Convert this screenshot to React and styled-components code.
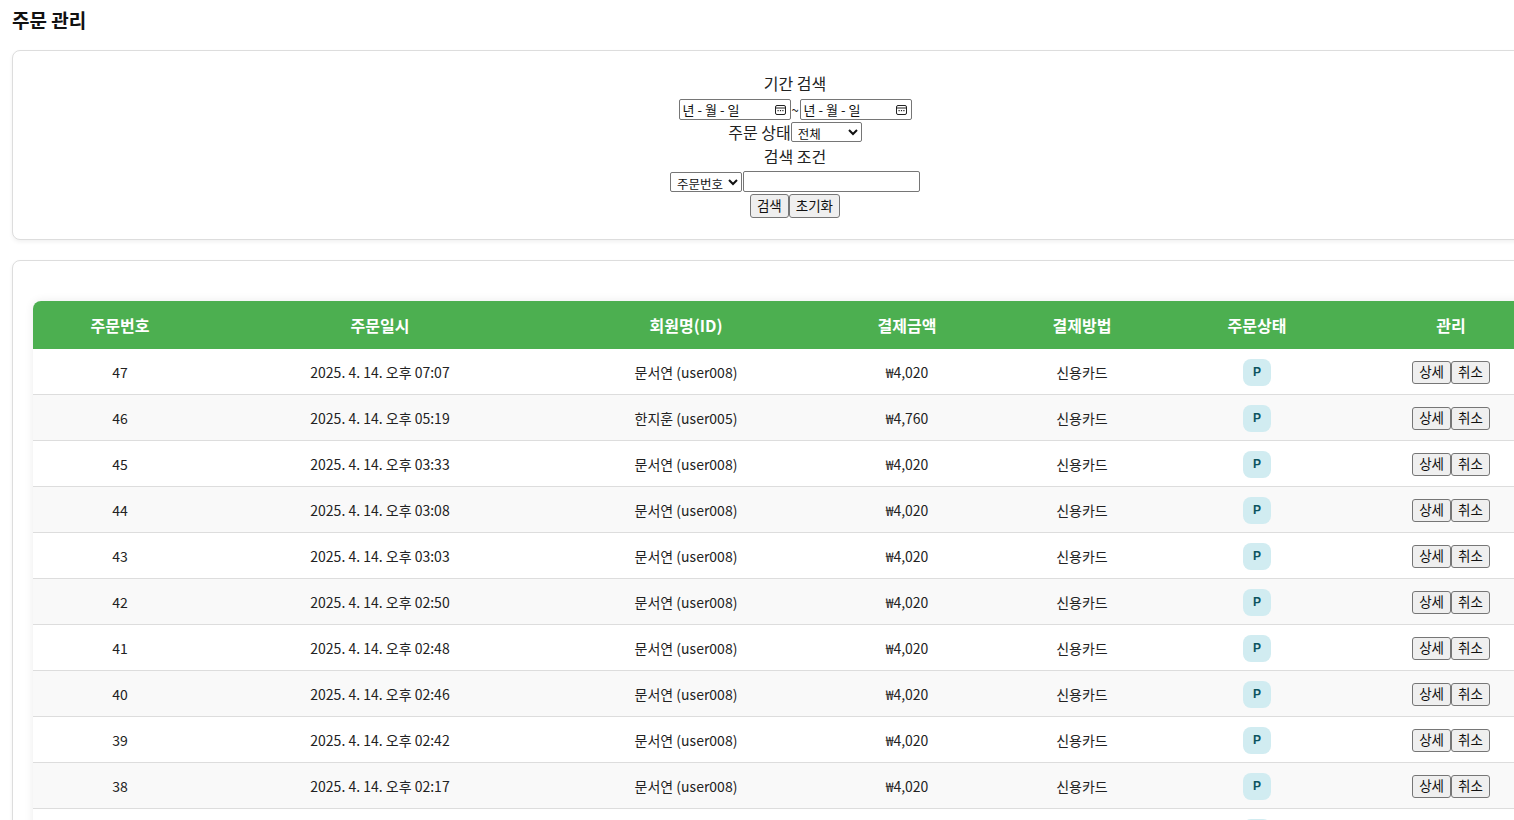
import React from "react";
import styled, { createGlobalStyle } from "styled-components";

const GlobalStyle = createGlobalStyle`
  html, body {
    margin: 0;
    overflow: hidden;
    background: #fff;
    font-family: "Noto Sans CJK KR", "Noto Sans", sans-serif;
    color: #222;
  }
`;

const orders = [
  { id: 47, time: "07:07", name: "문서연", user: "user008", price: "₩4,020" },
  { id: 46, time: "05:19", name: "한지훈", user: "user005", price: "₩4,760" },
  { id: 45, time: "03:33", name: "문서연", user: "user008", price: "₩4,020" },
  { id: 44, time: "03:08", name: "문서연", user: "user008", price: "₩4,020" },
  { id: 43, time: "03:03", name: "문서연", user: "user008", price: "₩4,020" },
  { id: 42, time: "02:50", name: "문서연", user: "user008", price: "₩4,020" },
  { id: 41, time: "02:48", name: "문서연", user: "user008", price: "₩4,020" },
  { id: 40, time: "02:46", name: "문서연", user: "user008", price: "₩4,020" },
  { id: 39, time: "02:42", name: "문서연", user: "user008", price: "₩4,020" },
  { id: 38, time: "02:17", name: "문서연", user: "user008", price: "₩4,020" },
  { id: 37, time: "02:10", name: "문서연", user: "user008", price: "₩4,020" },
];

const columns = [
  { label: "주문번호", width: 174 },
  { label: "주문일시", width: 346 },
  { label: "회원명(ID)", width: 266 },
  { label: "결제금액", width: 176 },
  { label: "결제방법", width: 174 },
  { label: "주문상태", width: 176 },
  { label: "관리", width: 212 },
];

function CalendarIcon() {
  return (
    <svg width="11" height="11" viewBox="0 0 11 11" fill="none">
      <rect x="0.5" y="1.5" width="10" height="9" rx="1.5" stroke="#222" />
      <line x1="0.5" y1="4" x2="10.5" y2="4" stroke="#222" />
      <rect x="2.5" y="6" width="1.2" height="1.2" fill="#222" />
      <rect x="4.9" y="6" width="1.2" height="1.2" fill="#222" />
      <rect x="7.3" y="6" width="1.2" height="1.2" fill="#222" />
    </svg>
  );
}

function DateField() {
  return (
    <DateBox>
      <DateText>년-월-일</DateText>
      <CalendarIcon />
    </DateBox>
  );
}

export default function App() {
  return (
    <>
      <GlobalStyle />
      <Page>
        <Title>주문 관리</Title>
        <FilterCard>
          <Label>기간 검색</Label>
          <DateRow>
            <DateField />
            <Tilde>~</Tilde>
            <DateField />
          </DateRow>
          <StatusRow>
            <Label>주문 상태</Label>
            <Select $width={71}>
              <option>전체</option>
            </Select>
          </StatusRow>
          <Label>검색 조건</Label>
          <SearchRow>
            <Select $width={72}>
              <option>주문번호</option>
            </Select>
            <TextInput type="text" />
          </SearchRow>
          <ButtonRow>
            <NativeButton>검색</NativeButton>
            <NativeButton>초기화</NativeButton>
          </ButtonRow>
        </FilterCard>

        <TableCard>
          <Table>
            <colgroup>
              {columns.map((c) => (
                <col key={c.label} style={{ width: c.width }} />
              ))}
            </colgroup>
            <thead>
              <tr>
                {columns.map((c) => (
                  <Th key={c.label}>{c.label}</Th>
                ))}
              </tr>
            </thead>
            <tbody>
              {orders.map((o) => (
                <Tr key={o.id}>
                  <Td>{o.id}</Td>
                  <Td>2025. 4. 14. 오후 {o.time}</Td>
                  <Td>
                    {o.name} ({o.user})
                  </Td>
                  <Td>{o.price}</Td>
                  <Td>신용카드</Td>
                  <Td>
                    <CellCenter>
                      <Badge>P</Badge>
                    </CellCenter>
                  </Td>
                  <Td>
                    <CellCenter>
                      <NativeButton $small>상세</NativeButton>
                      <NativeButton $small>취소</NativeButton>
                    </CellCenter>
                  </Td>
                </Tr>
              ))}
            </tbody>
          </Table>
        </TableCard>
      </Page>
    </>
  );
}

const Page = styled.div`
  width: 1566px;
  padding: 0 12px;
`;

const Title = styled.h2`
  margin: 0;
  padding-top: 8px;
  font-size: 19px;
  line-height: 24px;
  font-weight: 700;
  color: #111;
`;

const Card = styled.div`
  background: #fff;
  border: 1px solid #ddd;
  border-radius: 8px;
  box-shadow: 0 2px 4px rgba(0, 0, 0, 0.06);
  padding: 20px;
  box-sizing: border-box;
`;

const FilterCard = styled(Card)`
  margin-top: 18px;
  padding-bottom: 21px;
  display: flex;
  flex-direction: column;
  align-items: center;
`;

const Label = styled.div`
  font-size: 16px;
  line-height: 24px;
  color: #222;
`;

const DateRow = styled.div`
  display: flex;
  align-items: center;
  margin-top: 4px;
  height: 21px;
`;

const DateBox = styled.div`
  width: 112px;
  height: 21px;
  box-sizing: border-box;
  border: 1px solid #767676;
  border-radius: 2px;
  padding: 0 4px 0 3px;
  display: flex;
  align-items: center;
  justify-content: space-between;
  font-size: 13px;
  color: #111;
`;

const DateText = styled.span`
  letter-spacing: 3px;
`;

const Tilde = styled.span`
  font-size: 13px;
  width: 9px;
  text-align: center;
`;

const StatusRow = styled.div`
  display: flex;
  align-items: center;
  height: 24px;
`;

const Select = styled.select`
  width: ${(p) => p.$width}px;
  height: 20px;
  box-sizing: border-box;
  padding: 0 0 0 2px;
  margin: 0;
  font-family: "Noto Sans CJK KR", sans-serif;
  font-size: 12.5px;
  line-height: 16px;
  border: 1px solid #767676;
  border-radius: 2px;
  background: #fff;
  color: #111;
`;

const SearchRow = styled.div`
  display: flex;
  align-items: center;
  margin-top: 3px;
  height: 21px;
`;

const TextInput = styled.input`
  width: 177px;
  height: 21px;
  box-sizing: border-box;
  margin: 0 0 0 1px;
  border: 1px solid #767676;
  border-radius: 2px;
  padding: 1px 2px;
`;

const ButtonRow = styled.div`
  display: flex;
  margin-top: 2px;
`;

const NativeButton = styled.button`
  height: ${(p) => (p.$small ? 23 : 24)}px;
  box-sizing: border-box;
  margin: 0;
  padding: 0 6px;
  font-family: "Noto Sans CJK KR", sans-serif;
  font-size: 13.5px;
  line-height: 1;
  color: #111;
  background: #efefef;
  border: 1px solid #767676;
  border-radius: 3px;
`;

const TableCard = styled(Card)`
  margin-top: 20px;
  padding-top: 40px;
`;

const Table = styled.table`
  width: 1524px;
  table-layout: fixed;
  border-collapse: collapse;
  border-radius: 8px 8px 0 0;
  overflow: hidden;
  box-shadow: 0 0 10px rgba(0, 0, 0, 0.08);
`;

const Th = styled.th`
  background: #4caf50;
  color: #fff;
  font-size: 16px;
  font-weight: 700;
  height: 48px;
  padding: 0;
  text-align: center;
`;

const Tr = styled.tr`
  background: #fff;
  &:nth-child(even) {
    background: #f9f9f9;
  }
`;

const Td = styled.td`
  height: 45px;
  padding: 0;
  text-align: center;
  font-size: 14px;
  color: #222;
  border-bottom: 1px solid #ddd;
`;

const CellCenter = styled.div`
  display: flex;
  align-items: center;
  justify-content: center;
  padding-top: 1px;
`;

const Badge = styled.span`
  display: flex;
  align-items: center;
  justify-content: center;
  width: 28px;
  height: 27px;
  border-radius: 8px;
  background: #d1ecf1;
  color: #0c5460;
  font-family: "Liberation Sans", sans-serif;
  font-size: 12px;
  font-weight: 700;
`;
